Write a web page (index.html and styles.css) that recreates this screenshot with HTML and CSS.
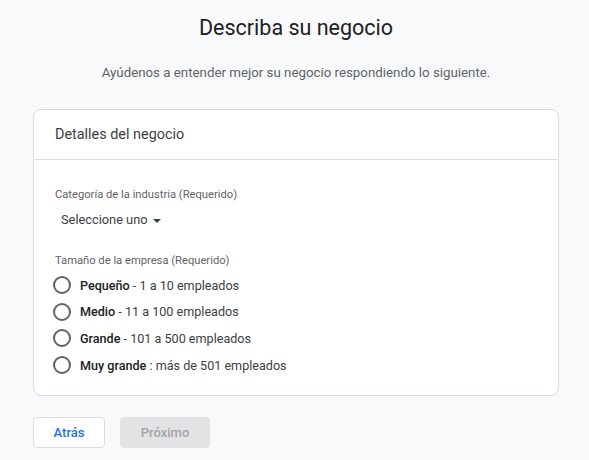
FILE: index.html
```html
<!DOCTYPE html>
<html lang="es">
<head>
<meta charset="utf-8">
<title>Describa su negocio</title>
<link rel="stylesheet" href="styles.css">
</head>
<body>
<main class="page">
  <h1 class="title">Describa su negocio</h1>
  <p class="subtitle">Ayúdenos a entender mejor su negocio respondiendo lo siguiente.</p>
  <section class="card">
    <div class="card-header">Detalles del negocio</div>
    <div class="card-body">
      <div class="field-label">Categoría de la industria (Requerido)</div>
      <div class="select">Seleccione uno <span class="caret"></span></div>
      <div class="field-label size-label">Tamaño de la empresa (Requerido)</div>
      <ul class="radios">
        <li class="radio"><span class="circle"></span><span class="opt"><b>Pequeño</b> - 1 a 10 empleados</span></li>
        <li class="radio"><span class="circle"></span><span class="opt"><b>Medio</b> - 11 a 100 empleados</span></li>
        <li class="radio"><span class="circle"></span><span class="opt"><b>Grande</b> - 101 a 500 empleados</span></li>
        <li class="radio"><span class="circle"></span><span class="opt"><b>Muy grande</b> : más de 501 empleados</span></li>
      </ul>
    </div>
  </section>
  <div class="actions">
    <button class="btn btn-back">Atrás</button>
    <button class="btn btn-next" disabled>Próximo</button>
  </div>
</main>
</body>
</html>
```
FILE: styles.css
```css
* { box-sizing: border-box; }
html, body { margin: 0; padding: 0; }
body {
  background: #f8f9fa;
  font-family: Roboto, "Liberation Sans", sans-serif;
  color: #3c4043;
}
.page {
  padding: 14px 30px 0 33px;
}
.title {
  margin: 0;
  font-size: 21.5px;
  line-height: 28px;
  font-weight: 400;
  color: #202124;
  text-align: center;
}
.subtitle {
  margin: 21px 0 0;
  font-size: 13.3px;
  line-height: 20px;
  color: #5f6368;
  text-align: center;
}
.card {
  margin-top: 26px;
  width: 526px;
  background: #fff;
  border: 1px solid #dadce0;
  border-radius: 8px;
}
.card-header {
  height: 50px;
  border-bottom: 1px solid #dadce0;
  padding-left: 21px;
  display: flex;
  align-items: center;
  font-size: 14.4px;
  color: #3c4043;
}
.card-body {
  padding: 27px 21px 17px;
}
.field-label {
  font-size: 11.2px;
  line-height: 16px;
  color: #5f6368;
}
.select {
  margin-top: 7px;
  padding-left: 6px;
  font-size: 12.8px;
  line-height: 20px;
  color: #3c4043;
  display: flex;
  align-items: center;
  gap: 5px;
}
.caret {
  width: 0;
  height: 0;
  border-left: 4px solid transparent;
  border-right: 4px solid transparent;
  border-top: 4px solid #3c4043;
  margin-top: 2px;
}
.size-label {
  margin-top: 23px;
}
.radios {
  list-style: none;
  margin: 3px 0 0;
  padding: 0;
}
.radio {
  display: flex;
  align-items: center;
  height: 26.6px;
}
.circle {
  width: 18px;
  height: 18px;
  border: 2px solid #5f6368;
  border-radius: 50%;
  margin-left: -2px;
  flex: none;
}
.opt {
  margin-left: 9px;
  font-size: 12.6px;
  color: #3c4043;
}
.opt b {
  font-weight: 500;
  color: #202124;
}
.actions {
  margin-top: 21px;
  display: flex;
  gap: 15px;
}
.btn {
  height: 31px;
  border-radius: 4px;
  font-family: Roboto, "Liberation Sans", sans-serif;
  font-size: 13px;
  font-weight: 500;
  padding: 0;
}
.btn-back {
  width: 72px;
  background: #fff;
  border: 1px solid #dadce0;
  color: #1a73e8;
}
.btn-next {
  width: 90px;
  background: #e2e3e5;
  border: none;
  color: #a3a5a9;
}
```
